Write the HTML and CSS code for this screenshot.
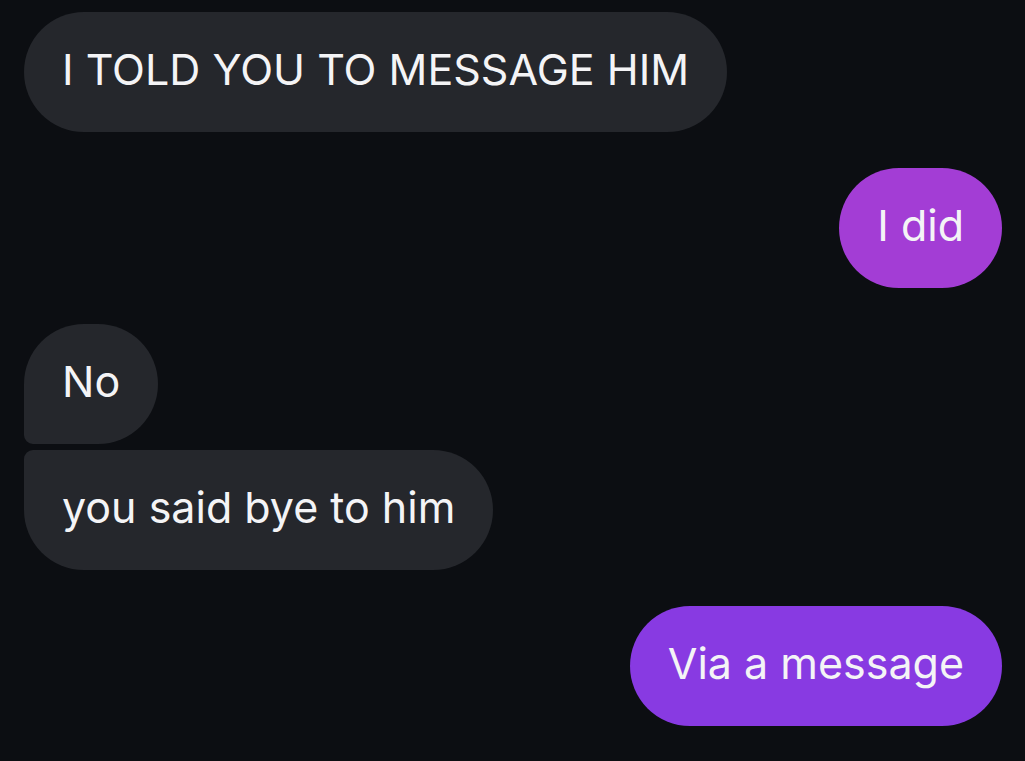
FILE: index.html
```html
<!DOCTYPE html>
<html>
<head>
<meta charset="utf-8">
<link rel="stylesheet" href="styles.css">
</head>
<body>
<div class="thread">
  <div class="row in"><div class="bubble gray single">I TOLD YOU TO MESSAGE HIM</div></div>
  <div class="row out gap"><div class="bubble purple1 single">I did</div></div>
  <div class="row in gap"><div class="bubble gray first">No</div></div>
  <div class="row in tight"><div class="bubble gray last">you said bye to him</div></div>
  <div class="row out gap"><div class="bubble purple2 single">Via a message</div></div>
</div>
</body>
</html>
```
FILE: styles.css
```css
html, body {
  margin: 0;
  padding: 0;
  background: #0c0e12;
  height: 100%;
}
.thread {
  display: flex;
  flex-direction: column;
  padding: 12px 23px 0 24px;
  font-family: Inter, "Noto Sans", sans-serif;
}
.row {
  display: flex;
}
.row.in { justify-content: flex-start; }
.row.out { justify-content: flex-end; }
.row.gap { margin-top: 36px; }
.row.tight { margin-top: 6px; }
.bubble {
  box-sizing: border-box;
  height: 120px;
  padding: 0 38px 6px;
  display: flex;
  align-items: center;
  font-size: 43px;
  color: #f4f4f6;
  border-radius: 60px;
  white-space: nowrap;
}
.gray { background: #25272c; }
.purple1 { background: #a33dd5; }
.purple2 { background: #883ae2; }
.first { border-bottom-left-radius: 9px; }
.last { border-top-left-radius: 9px; }
```
